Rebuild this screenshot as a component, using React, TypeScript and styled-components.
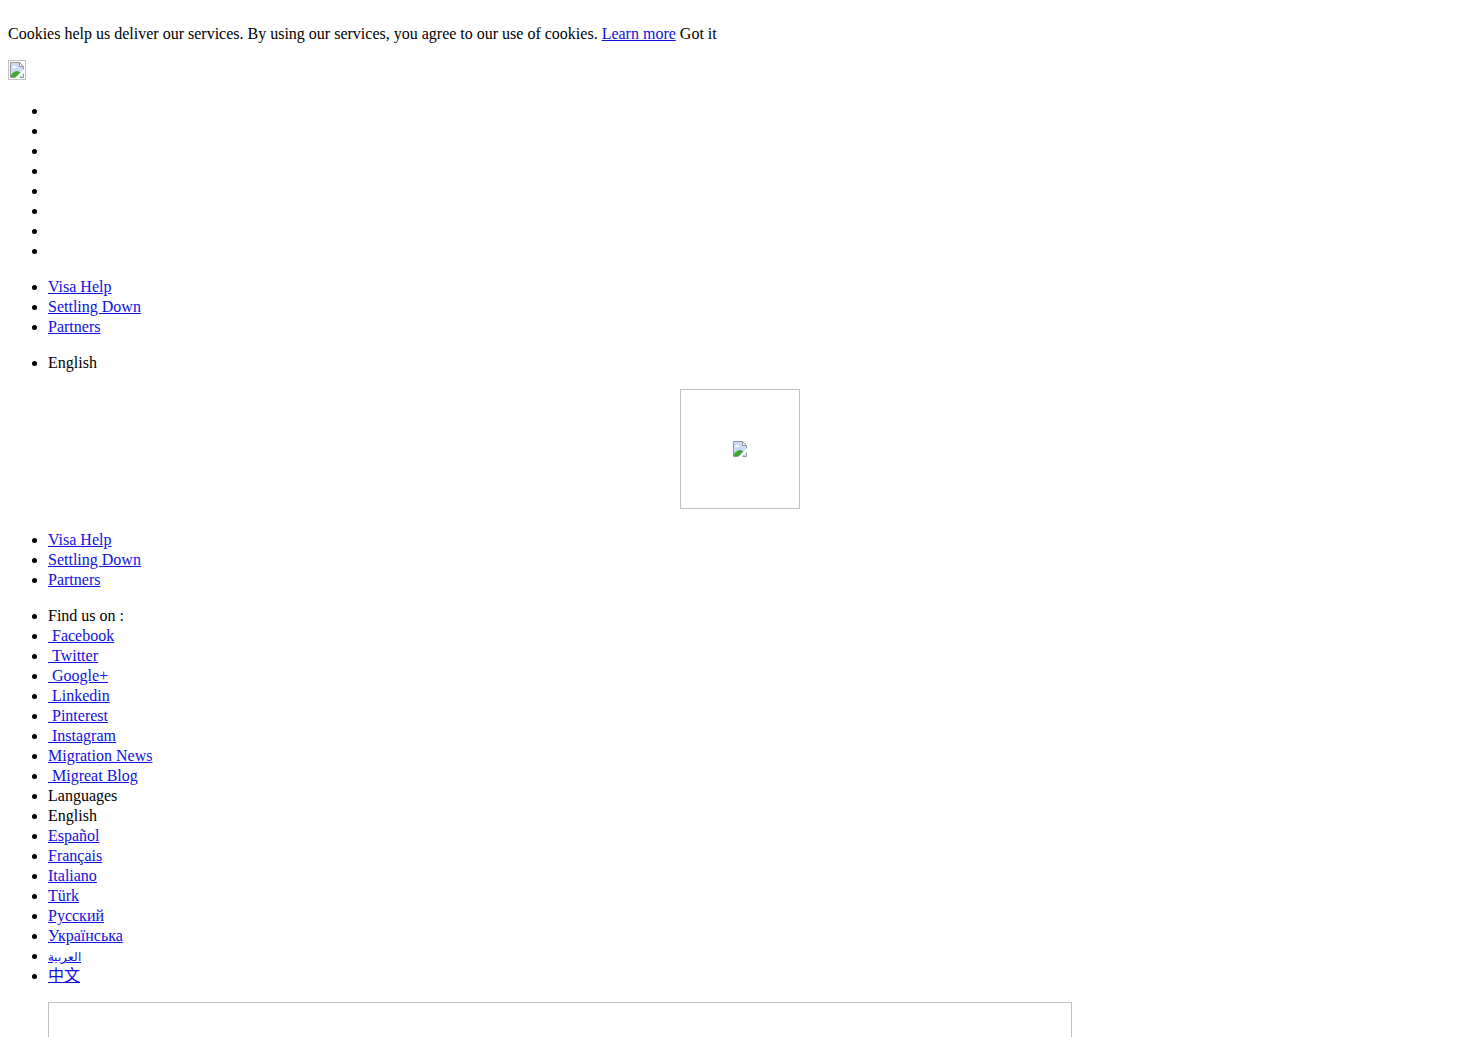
import React from "react";
import styled, { createGlobalStyle } from "styled-components";

const GlobalStyle = createGlobalStyle`
  body {
    margin: 8px;
    background: #fff;
    color: #000;
    font: 16px/20px "Liberation Serif", "Noto Sans CJK SC", serif;
  }
`;

const Notice = styled.p`
  margin: 16px 0;
`;

const Link = styled.a`
  color: #1010e0;
  text-decoration: underline;

  &:lang(ar) {
    font-size: 12px;
  }
`;

const List = styled.ul`
  margin: 16px 0;
  padding-left: 40px;
  list-style: disc;
`;

const Item = styled.li`
  height: 20px;
`;

const LogoLink = styled.a`
  display: flex;
  padding-bottom: 5px;
`;

const Frame = styled.span<{ $width: string; $height: number }>`
  box-sizing: border-box;
  display: flex;
  align-items: center;
  justify-content: center;
  width: ${(p) => p.$width};
  height: ${(p) => p.$height}px;
  border: 1px solid #c0c0c0;
`;

const Center = styled.div`
  display: flex;
  justify-content: center;
  padding-bottom: 5px;
`;

const Banner = styled.div`
  max-width: 1024px;
  margin-left: 40px;
`;

const Icon = () => (
  <svg width="16" height="16" viewBox="0 0 16 16" aria-hidden="true">
    <path d="M1.5 .5h9l4 4v11h-13z" fill="#cbdcfb" />
    <path d="M2 15v-2c2-3 4-4 6-4s3 1 4 2v4z" fill="#43a832" />
    <path d="M3 6c0-1 1-1 1-1 0-1 2-2 3 0 1 0 1 1 1 1z" fill="#fff" />
    <path d="M1.5 .5h9l4 4v11h-13z" fill="none" stroke="#969696" />
    <path d="M10.500 .5v4h4z" fill="#fff" stroke="#969696" />
    <path d="M6 16L15 7v4l-5 5z" fill="#fff" />
  </svg>
);

const sections = ["Visa Help", "Settling Down", "Partners"];

const entries: { text: string; link?: boolean; lang?: string }[] = [
  { text: "Find us on :" },
  { text: "\u00a0Facebook", link: true },
  { text: "\u00a0Twitter", link: true },
  { text: "\u00a0Google+", link: true },
  { text: "\u00a0Linkedin", link: true },
  { text: "\u00a0Pinterest", link: true },
  { text: "\u00a0Instagram", link: true },
  { text: "Migration News", link: true },
  { text: "\u00a0Migreat Blog", link: true },
  { text: "Languages" },
  { text: "English" },
  { text: "Español", link: true, lang: "es" },
  { text: "Français", link: true, lang: "fr" },
  { text: "Italiano", link: true, lang: "it" },
  { text: "Türk", link: true, lang: "tr" },
  { text: "Русский", link: true, lang: "ru" },
  { text: "Українська", link: true, lang: "uk" },
  { text: "العربية", link: true, lang: "ar" },
  { text: "中文", link: true, lang: "zh" },
];

const Sections = () => (
  <List>
    {sections.map((name) => (
      <Item key={name}>
        <Link href="#">{name}</Link>
      </Item>
    ))}
  </List>
);

export default function App() {
  return (
    <>
      <GlobalStyle />
      <Notice>
        Cookies help us deliver our services. By using our services, you agree to our use of cookies.{" "}
        <Link href="#">Learn more</Link> Got it
      </Notice>
      <LogoLink href="#" aria-label="Home">
        <Frame $width="18px" $height={20}>
          <Icon />
        </Frame>
      </LogoLink>
      <List>
        {Array.from({ length: 8 }, (_, i) => (
          <Item key={i} />
        ))}
      </List>
      <Sections />
      <List>
        <Item>English</Item>
      </List>
      <Center>
        <Frame $width="120px" $height={120}>
          <Icon />
        </Frame>
      </Center>
      <Sections />
      <List>
        {entries.map((e) => (
          <Item key={e.text}>
            {e.link ? (
              <Link href="#" lang={e.lang}>
                {e.text}
              </Link>
            ) : (
              e.text
            )}
          </Item>
        ))}
      </List>
      <Banner>
        <Frame $width="100%" $height={400} />
      </Banner>
    </>
  );
}
